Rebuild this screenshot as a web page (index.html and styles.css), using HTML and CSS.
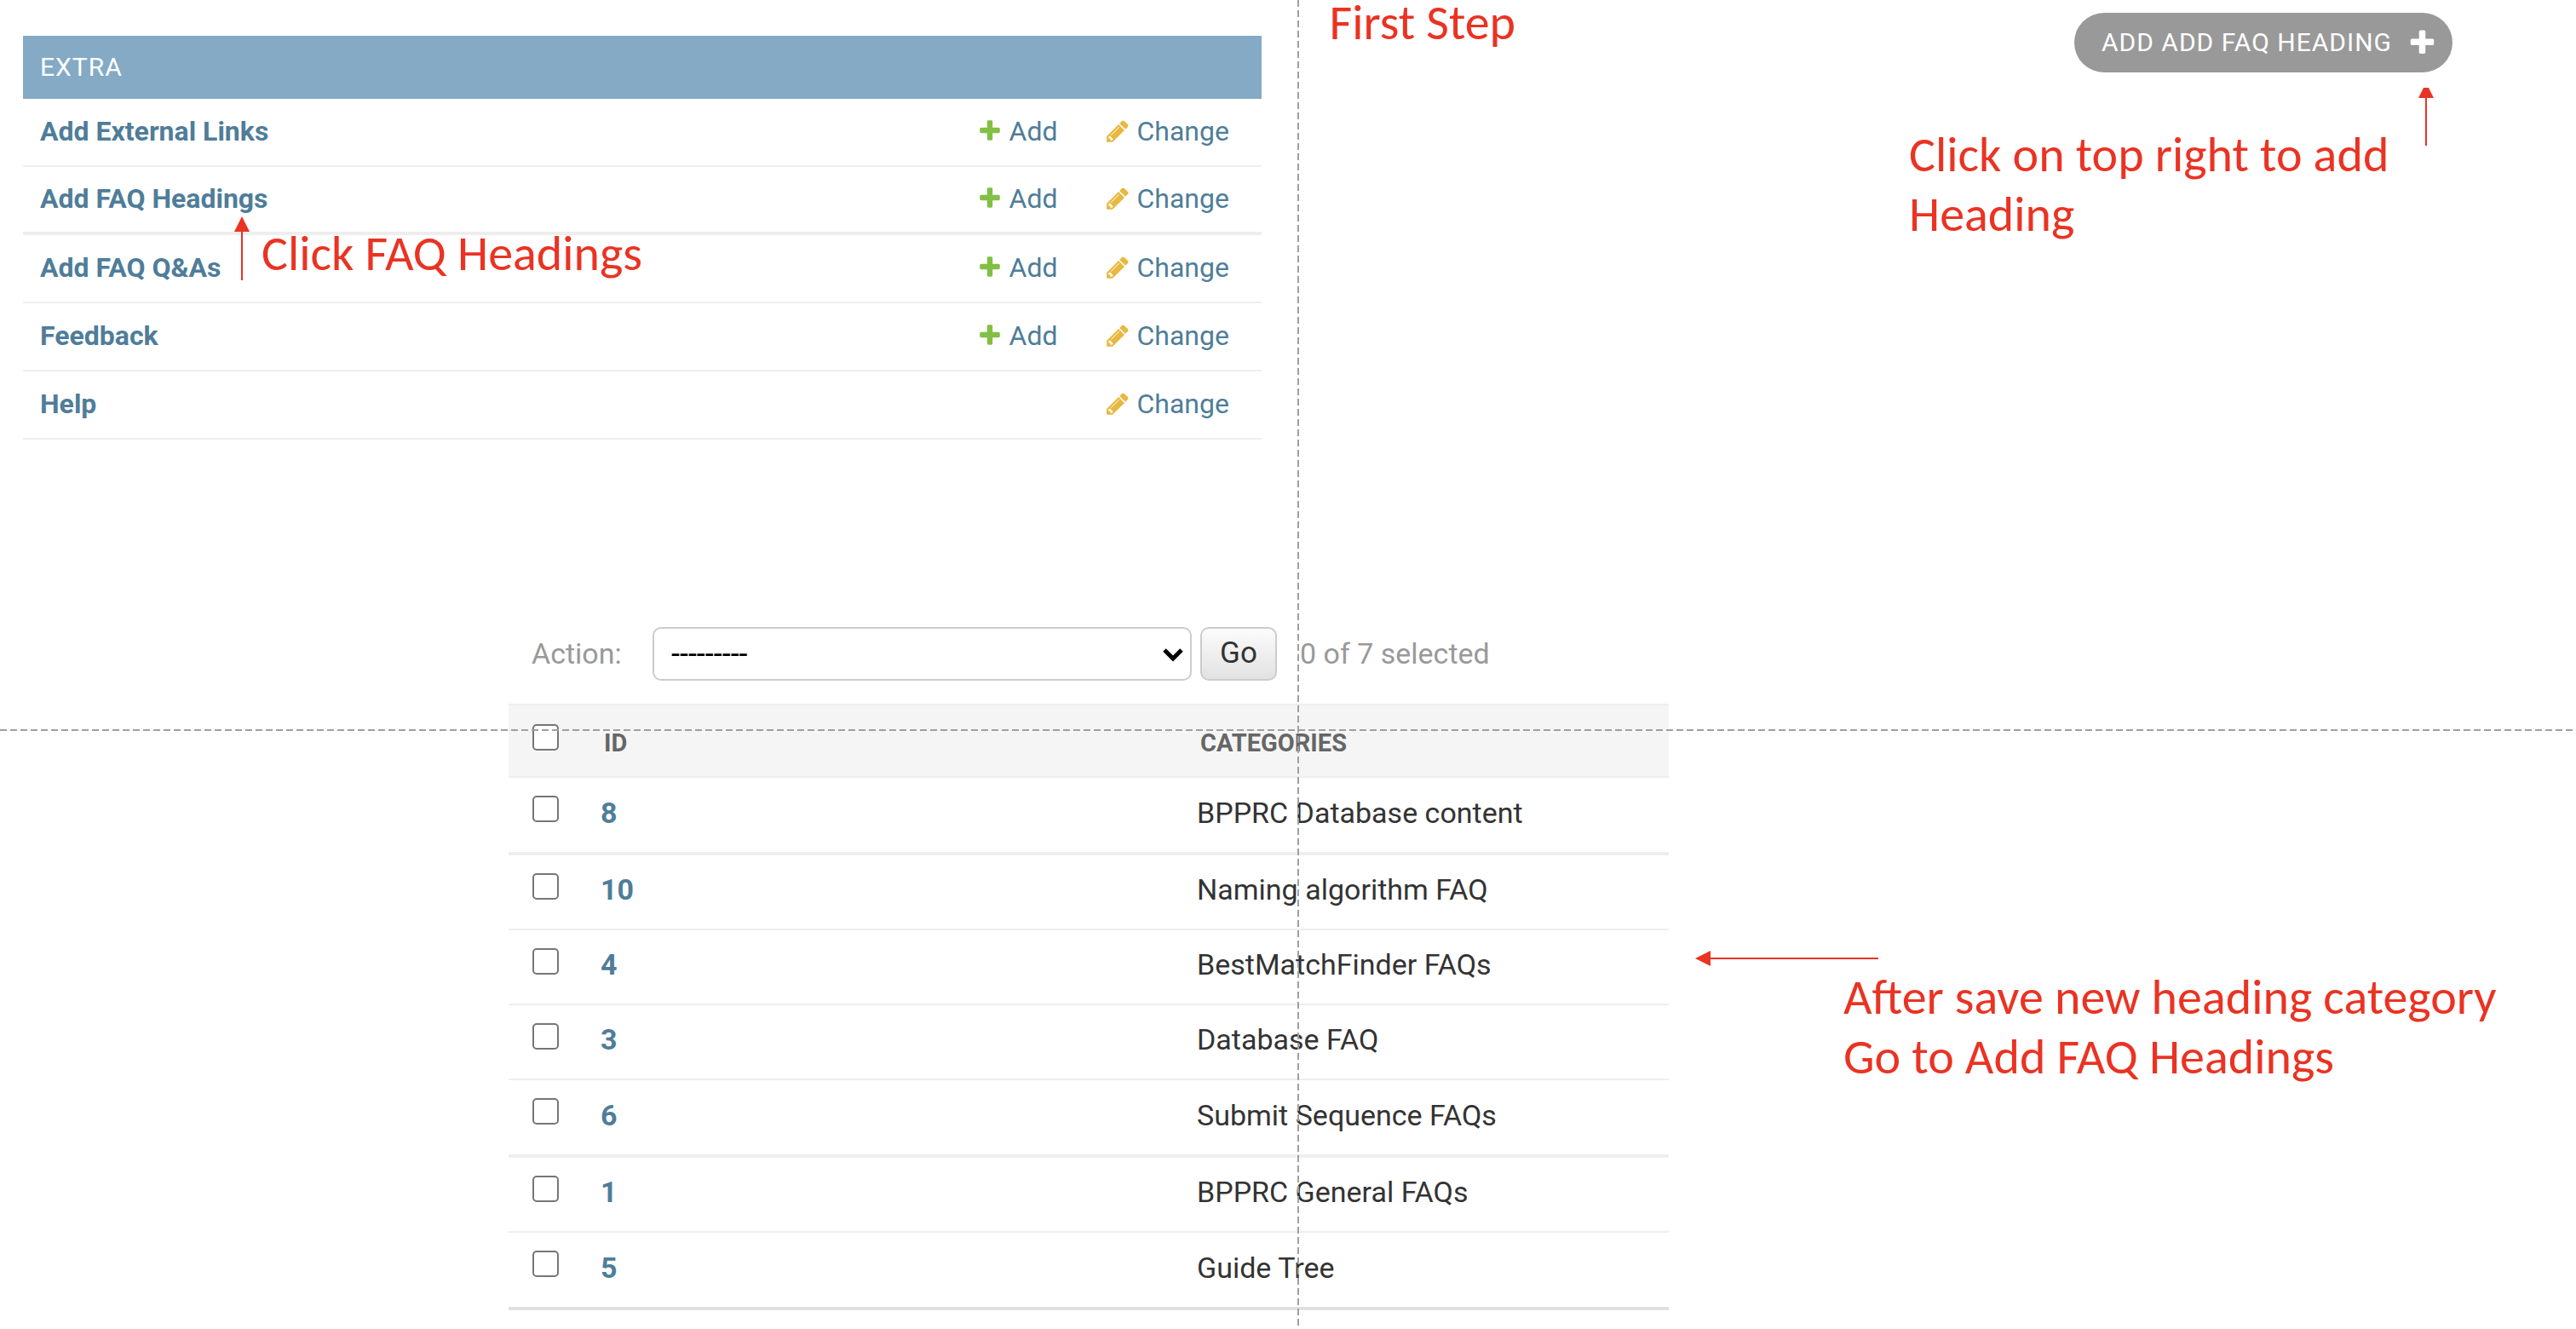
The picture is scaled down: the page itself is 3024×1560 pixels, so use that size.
FILE: index.html
```html
<!DOCTYPE html>
<html lang="en">
<head>
<meta charset="utf-8">
<title>FAQ headings: first step</title>
<link rel="stylesheet" href="styles.css">
</head>
<body>
<svg class="symbols" aria-hidden="true">
  <symbol id="plus" viewBox="0 0 1792 1792"><path d="M1600 736v192q0 40-28 68t-68 28h-416v416q0 40-28 68t-68 28h-192q-40 0-68-28t-28-68v-416h-416q-40 0-68-28t-28-68v-192q0-40 28-68t68-28h416v-416q0-40 28-68t68-28h192q40 0 68 28t28 68v416h416q40 0 68 28t28 68z"/></symbol>
  <symbol id="pencil" viewBox="0 0 1792 1792"><path d="M491 1536l91-91-235-235-91 91v107h128v128h107zm523-928q0-22-22-22-10 0-17 7l-542 542q-7 7-7 17 0 22 22 22 10 0 17-7l542-542q7-7 7-17zm-54-192l416 416-832 832h-416v-416zm683 96q0 53-37 90l-166 166-416-416 166-165q36-38 90-38 53 0 91 38l235 234q37 39 37 91z"/></symbol>
</svg>

<main class="slide">
  <section class="top">
    <div class="module">
      <table class="models">
        <caption>EXTRA</caption>
        <tbody>
          <tr><th scope="row"><a href="#">Add External Links</a></th><td><a class="add" href="#"><svg><use href="#plus"/></svg>Add</a></td><td><a class="change" href="#"><svg><use href="#pencil"/></svg>Change</a></td></tr>
          <tr><th scope="row"><a href="#">Add FAQ Headings</a></th><td><a class="add" href="#"><svg><use href="#plus"/></svg>Add</a></td><td><a class="change" href="#"><svg><use href="#pencil"/></svg>Change</a></td></tr>
          <tr><th scope="row"><a href="#">Add FAQ Q&amp;As</a></th><td><a class="add" href="#"><svg><use href="#plus"/></svg>Add</a></td><td><a class="change" href="#"><svg><use href="#pencil"/></svg>Change</a></td></tr>
          <tr><th scope="row"><a href="#">Feedback</a></th><td><a class="add" href="#"><svg><use href="#plus"/></svg>Add</a></td><td><a class="change" href="#"><svg><use href="#pencil"/></svg>Change</a></td></tr>
          <tr><th scope="row"><a href="#">Help</a></th><td></td><td><a class="change" href="#"><svg><use href="#pencil"/></svg>Change</a></td></tr>
        </tbody>
      </table>
      <div class="callout">
        <svg class="arrow" width="18" height="75" viewBox="0 0 18 75" aria-hidden="true"><path d="M9 0l9 18h-8v57h-2v-57h-8z"/></svg>
        <p class="note">Click FAQ Headings</p>
      </div>
    </div>

    <h1 class="note title">First Step</h1>

    <div class="tools">
      <a class="addlink" href="#">ADD ADD FAQ HEADING<svg><use href="#plus"/></svg></a>
      <div class="hint">
        <p class="note">Click on top right to add Heading</p>
        <svg class="arrow" width="18" height="68" viewBox="0 0 18 68" aria-hidden="true"><path d="M6 0h6l6 12h-8v56h-2v-56h-8z"/></svg>
      </div>
    </div>
  </section>

  <section class="bottom">
    <form class="changelist">
      <div class="actions">
        <label for="action">Action:</label>
        <span class="picker">
          <select id="action"><option>---------</option></select>
          <svg viewBox="0 0 26 18" aria-hidden="true"><path d="M3 3l10 10 10-10"/></svg>
        </span>
        <button type="button">Go</button>
        <span class="counter">0 of 7 selected</span>
      </div>
      <table class="results">
        <thead>
          <tr><th class="check"><input type="checkbox" aria-label="Select all"></th><th class="id" scope="col">ID</th><th scope="col">CATEGORIES</th></tr>
        </thead>
        <tbody>
          <tr class="thick"><td class="check"><input type="checkbox" aria-label="Select 8"></td><th scope="row"><a href="#">8</a></th><td>BPPRC Database content</td></tr>
          <tr><td class="check"><input type="checkbox" aria-label="Select 10"></td><th scope="row"><a href="#">10</a></th><td>Naming algorithm FAQ</td></tr>
          <tr><td class="check"><input type="checkbox" aria-label="Select 4"></td><th scope="row"><a href="#">4</a></th><td>BestMatchFinder FAQs</td></tr>
          <tr><td class="check"><input type="checkbox" aria-label="Select 3"></td><th scope="row"><a href="#">3</a></th><td>Database FAQ</td></tr>
          <tr class="thick"><td class="check"><input type="checkbox" aria-label="Select 6"></td><th scope="row"><a href="#">6</a></th><td>Submit Sequence FAQs</td></tr>
          <tr><td class="check"><input type="checkbox" aria-label="Select 1"></td><th scope="row"><a href="#">1</a></th><td>BPPRC General FAQs</td></tr>
          <tr class="thick last"><td class="check"><input type="checkbox" aria-label="Select 5"></td><th scope="row"><a href="#">5</a></th><td>Guide Tree</td></tr>
        </tbody>
      </table>
    </form>

    <div class="after">
      <svg class="arrow" width="215" height="18" viewBox="0 0 215 18" aria-hidden="true"><path d="M0 9l18-9v8h197v2h-197v8z"/></svg>
      <p class="note">After save new heading category<br>Go to Add FAQ Headings</p>
    </div>
  </section>

  <div class="guide guide-v"></div>
  <div class="guide guide-h"></div>
</main>
</body>
</html>
```
FILE: styles.css
```css
* { box-sizing: border-box; }

body {
  margin: 0;
  background: #fff;
  color: #333;
  font: 32px/40px Roboto, sans-serif;
}

a { color: #4f7d99; text-decoration: none; }
table { border-collapse: separate; border-spacing: 0; width: 100%; }
.symbols { position: absolute; width: 0; height: 0; }

.slide {
  position: relative;
  min-height: 100vh;
  overflow: hidden;
}

/* red presenter notes */
.note {
  margin: 0;
  color: #ea3323;
  font: 400 58px/70px Carlito, Calibri, Lato, sans-serif;
}
.arrow { display: block; flex: none; fill: #ea3323; }

.top {
  display: flex;
  align-items: flex-start;
  padding-left: 27px;
}

/* app module */
.module {
  position: relative;
  flex: 0 0 calc(50% - 45px);
  margin-top: 42px;
}
.models caption {
  height: 74px;
  padding: 17px 20px;
  background: #84aac5;
  color: #fff;
  font-size: 30px;
  letter-spacing: 1px;
  text-align: left;
}
.models th,
.models td {
  height: 80px;
  padding: 0 0 2px;
  border-bottom: 2px solid #eee;
  text-align: left;
}
.models tr:nth-child(2) > * { border-bottom-width: 4px; }
.models th { padding-left: 20px; font-weight: 700; }
.models td:nth-child(2) { width: 150px; }
.models td:nth-child(3) { width: 184px; }
.models td a { display: flex; align-items: center; gap: 8px; }
.models svg { width: 30px; height: 30px; }
.add svg { fill: #83bf44; }
.change svg { fill: #e8b83f; }

.callout {
  position: absolute;
  top: 212px;
  left: 248px;
  display: flex;
  gap: 14px;
}
.callout .note { padding-top: 9px; }

.title { margin-left: 80px; line-height: 54px; white-space: nowrap; }

.tools {
  display: flex;
  flex-direction: column;
  width: 638px;
  margin: 15px 145px 0 auto;
}
.addlink {
  display: flex;
  align-items: center;
  align-self: flex-end;
  gap: 18px;
  height: 70px;
  padding: 0 18px 0 32px;
  border-radius: 35px;
  background: #999;
  color: #fff;
  font-size: 30px;
  letter-spacing: 1px;
}
.addlink svg { width: 35px; height: 35px; fill: #fff; }
.hint {
  display: flex;
  justify-content: space-between;
  padding: 18px 22px 0 0;
}
.hint .note { width: 570px; padding-top: 44px; }

/* change list */
.bottom {
  display: flex;
  align-items: flex-start;
  margin-top: 220px;
  padding-left: 597px;
}
.changelist { flex: 0 0 1362px; }
.actions {
  display: flex;
  align-items: center;
  height: 63px;
  margin: 0 0 27px 27px;
  color: #999;
  font-size: 34px;
}
.actions label,
.counter { padding-bottom: 2px; }
.picker { position: relative; width: 633px; margin: 0 10px 0 auto; }
.picker select {
  display: block;
  width: 100%;
  height: 63px;
  padding: 0 20px;
  border: 2px solid #ccc;
  border-radius: 10px;
  background: #fff;
  color: #000;
  font: 36px/40px Roboto, sans-serif;
  appearance: none;
}
.picker svg {
  position: absolute;
  top: 24px;
  right: 9px;
  width: 26px;
  height: 18px;
  fill: none;
  stroke: #000;
  stroke-width: 5;
  pointer-events: none;
}
.actions button {
  width: 90px;
  height: 63px;
  padding: 0 0 2px;
  border: 2px solid #ccc;
  border-radius: 10px;
  background: linear-gradient(#fcfcfc, #e2e2e2);
  color: #333;
  font: 35px/40px Roboto, sans-serif;
}
.counter { width: 433px; margin-left: 27px; }

.results th,
.results td {
  height: 88px;
  padding: 2px 0 8px;
  border-bottom: 2px solid #eee;
  text-align: left;
  vertical-align: middle;
  font-size: 34px;
}
.results thead th {
  height: 87px;
  padding: 4px 0 0 4px;
  border-top: 2px solid #eee;
  background: #f5f5f5;
  color: #666;
  font-size: 29px;
}
.results .check { width: 108px; padding: 0 0 14px 28px; line-height: 0; }
.results thead .check { padding: 0 0 8px 28px; }
.results .id { width: 700px; }
.results .thick > * { height: 91px; border-bottom-width: 4px; }
.results .last > * { border-bottom-color: #e0e0e0; }
.results input {
  width: 31px;
  height: 31px;
  margin: 0;
  border: 2px solid #767676;
  border-radius: 5px;
  background: #fff;
  appearance: none;
}

.after { padding: 380px 0 0 31px; }
.after .note { padding: 2px 0 0 174px; white-space: nowrap; }

/* dashed slide guides lie over everything */
.guide { position: absolute; }
.guide-v {
  top: 0;
  bottom: 0;
  left: calc(50% + 11px);
  width: 2px;
  background: repeating-linear-gradient(#a0a0a0 0 8px, transparent 8px 12px);
}
.guide-h {
  top: 856px;
  left: 0;
  right: 0;
  height: 2px;
  background: repeating-linear-gradient(90deg, #a0a0a0 0 8px, transparent 8px 12px);
}
```
